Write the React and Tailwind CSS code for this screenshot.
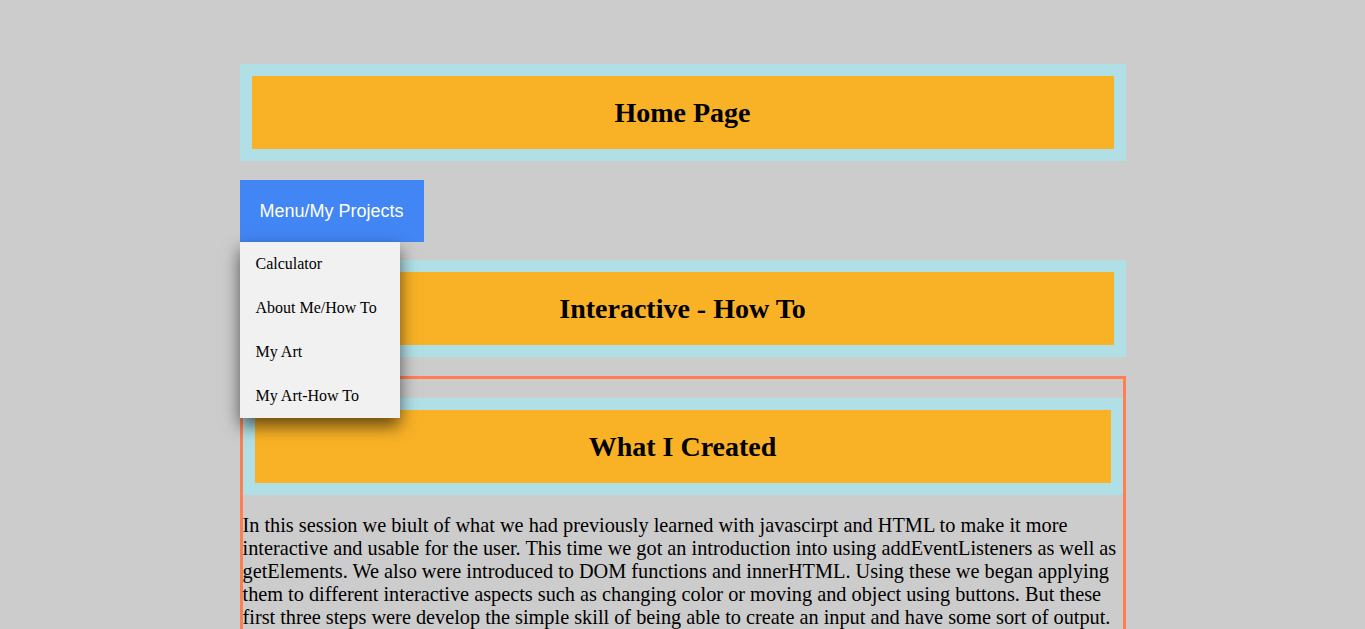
import React from "react";

const serif = { fontFamily: '"Liberation Serif", "Times New Roman", serif' };

const Banner = ({ title }) => (
  <div className="border-[12px] border-[#b0e0e6] bg-[#f9b226]">
    <h1 className="h-[73px] flex items-center justify-center text-[28px] font-bold leading-[32px] text-black">
      {title}
    </h1>
  </div>
);

const links = ["Calculator", "About Me/How To", "My Art", "My Art-How To"];

export default function App() {
  return (
    <div className="min-h-screen bg-[#cccccc] pt-[64px]" style={serif}>
      <div className="mx-auto w-[886px]">
        <Banner title="Home Page" />

        {/* Dropdown menu */}
        <div className="relative mt-[19px] inline-block">
          <button
            className="h-[62px] w-[184px] bg-[#4285f4] text-[18px] text-white"
            style={{ fontFamily: '"Liberation Sans", Arial, sans-serif' }}
          >
            Menu/My Projects
          </button>
          <div className="absolute left-0 top-[62px] z-10 w-[160px] bg-[#f1f1f1] shadow-[0px_8px_16px_0px_rgba(0,0,0,0.6)]">
            {links.map((l) => (
              <a key={l} href="#" className="block h-[44px] px-4 pt-[13px] text-[16px] leading-[18px] text-black">
                {l}
              </a>
            ))}
          </div>
        </div>

        <div className="mt-[18px]">
          <Banner title="Interactive - How To" />
        </div>

        <section className="mt-[19px] border-[3px] border-[#ff7f50] pt-[19px]">
          <Banner title="What I Created" />
          <p className="mt-[19px] text-[20.3px] leading-[23px] text-black">
            In this session we biult of what we had previously learned with javascirpt and HTML to make it more
            interactive and usable for the user. This time we got an introduction into using addEventListeners as well as
            getElements. We also were introduced to DOM functions and innerHTML. Using these we began applying
            them to different interactive aspects such as changing color or moving and object using buttons. But these
            first three steps were develop the simple skill of being able to create an input and have some sort of output.
          </p>
          <p className="mt-[20px] pb-[20px] text-[20.3px] leading-[23px] text-black">
            From there we moved on to building small projects that put these pieces together.
          </p>
        </section>
      </div>
    </div>
  );
}
